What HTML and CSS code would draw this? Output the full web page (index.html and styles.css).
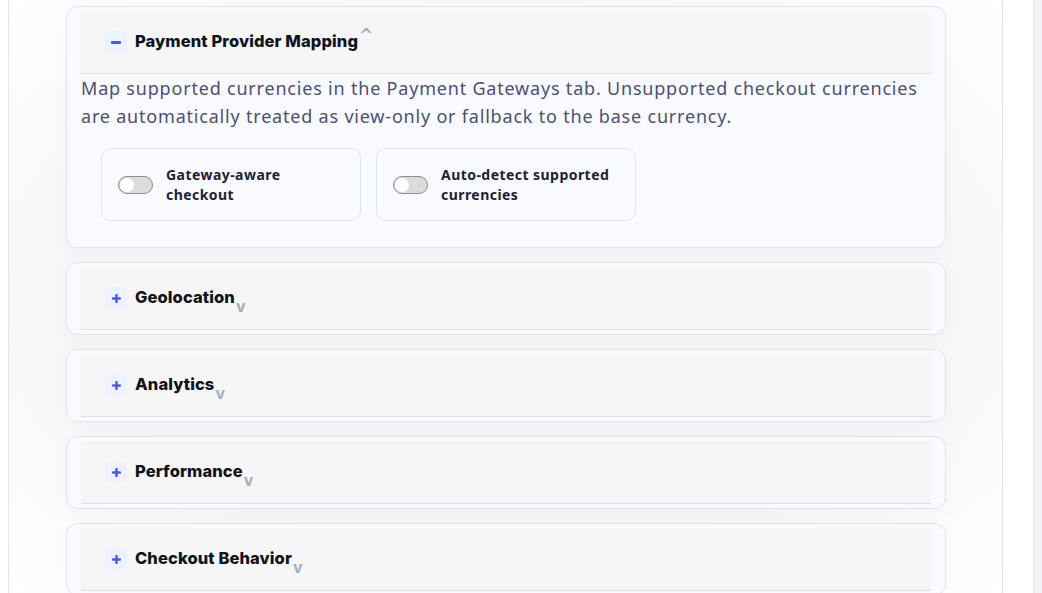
FILE: index.html
```html
<!DOCTYPE html>
<html lang="en">
<head>
  <meta charset="UTF-8">
  <meta name="viewport" content="width=device-width, initial-scale=1.0">
  <title>Currency Settings</title>
  <link rel="stylesheet" href="styles.css">
</head>
<body>
  <div class="page">
    <div class="panel">
      <div class="section open">
        <div class="section-head">
          <span class="sign"><span class="minus"></span></span>
          <span class="title">Payment Provider Mapping</span><span class="caret up">^</span>
        </div>
        <p class="desc">Map supported currencies in the Payment Gateways tab. Unsupported checkout currencies are automatically treated as view-only or fallback to the base currency.</p>
        <div class="toggles">
          <label class="toggle-card">
            <span class="switch"><span class="knob"></span></span>
            <span class="toggle-label">Gateway-aware<br>checkout</span>
          </label>
          <label class="toggle-card">
            <span class="switch"><span class="knob"></span></span>
            <span class="toggle-label">Auto-detect supported<br>currencies</span>
          </label>
        </div>
      </div>

      <div class="section">
        <div class="section-head">
          <span class="sign"><svg width="9" height="9" viewBox="0 0 9 9"><path d="M4.5 1v7M1 4.5h7" stroke="#4b57e6" stroke-width="2.4" stroke-linecap="round"/></svg></span>
          <span class="title">Geolocation</span><span class="caret down">v</span>
        </div>
      </div>

      <div class="section">
        <div class="section-head">
          <span class="sign"><svg width="9" height="9" viewBox="0 0 9 9"><path d="M4.5 1v7M1 4.5h7" stroke="#4b57e6" stroke-width="2.4" stroke-linecap="round"/></svg></span>
          <span class="title">Analytics</span><span class="caret down">v</span>
        </div>
      </div>

      <div class="section">
        <div class="section-head">
          <span class="sign"><svg width="9" height="9" viewBox="0 0 9 9"><path d="M4.5 1v7M1 4.5h7" stroke="#4b57e6" stroke-width="2.4" stroke-linecap="round"/></svg></span>
          <span class="title">Performance</span><span class="caret down">v</span>
        </div>
      </div>

      <div class="section">
        <div class="section-head">
          <span class="sign"><svg width="9" height="9" viewBox="0 0 9 9"><path d="M4.5 1v7M1 4.5h7" stroke="#4b57e6" stroke-width="2.4" stroke-linecap="round"/></svg></span>
          <span class="title">Checkout Behavior</span><span class="caret down">v</span>
        </div>
      </div>
    </div>
    <div class="rail"></div>
  </div>
</body>
</html>
```

FILE: styles.css
```css
html, body {
  margin: 0;
  height: 100%;
  overflow: hidden;
}

body {
  background: #fff;
  font-family: "Noto Sans", sans-serif;
}

.page {
  display: flex;
  height: 100%;
}

.panel {
  margin-left: 8px;
  width: 880px;
  padding: 6px 56px 6px 57px;
  border-left: 1px solid #dfe6f2;
  border-right: 1px solid #dfe6f2;
  background: radial-gradient(ellipse at center, #f6f6f7 60%, #ffffff 100%);
  display: flex;
  flex-direction: column;
  gap: 14px;
  flex-shrink: 0;
}

.rail {
  margin-left: 30px;
  flex: 1;
  background: #f1f2f5;
  border-left: 1px solid #e6e8ee;
}

.section {
  background: #f8faff;
  border: 1px solid #dde5f1;
  border-radius: 12px;
  padding: 4px 14px;
  box-shadow: 0 4px 18px rgba(30, 40, 80, 0.03);
  flex-shrink: 0;
}

.section.open {
  padding-bottom: 26px;
}

.section-head {
  height: 63px;
  box-sizing: border-box;
  background: #f5f6f5;
  border-bottom: 1px solid #dcdfe3;
  display: flex;
  align-items: center;
  padding-left: 24px;
}

.sign {
  width: 22px;
  height: 22px;
  border-radius: 7px;
  background: #eef1fe;
  display: flex;
  align-items: center;
  justify-content: center;
  margin-right: 8px;
}

.minus {
  width: 10px;
  height: 3px;
  background: #4b57e6;
  border-radius: 1px;
}

.title {
  font-family: Inter, sans-serif;
  font-weight: 800;
  font-size: 16.5px;
  color: #10121c;
  letter-spacing: 0.1px;
  position: relative;
  top: -1px;
}

.caret {
  font-weight: 700;
  color: #a3aec0;
  position: relative;
}

.caret.up {
  font-family: "DejaVu Sans", sans-serif;
  font-size: 17px;
  top: -7px;
  margin-left: 1px;
}

.caret.down {
  font-family: Inter, sans-serif;
  font-size: 16px;
  top: 8px;
  margin-left: 1px;
}

.desc {
  margin: 0;
  font-size: 18px;
  line-height: 28px;
  color: #4d5070;
  letter-spacing: 0.8px;
}

.toggles {
  display: flex;
  gap: 15px;
  margin: 18px 0 0 20px;
}

.toggle-card {
  width: 260px;
  height: 73px;
  box-sizing: border-box;
  border: 1px solid #dde5f1;
  border-radius: 10px;
  background: #f8faff;
  display: flex;
  align-items: center;
  padding-left: 16px;
}

.switch {
  width: 33px;
  height: 16px;
  border: 1px solid #8b8f99;
  border-radius: 9px;
  background: #dcdcdc;
  position: relative;
  margin-right: 13px;
  flex-shrink: 0;
}

.knob {
  position: absolute;
  left: 1px;
  top: 1px;
  width: 14px;
  height: 14px;
  border-radius: 50%;
  background: #fff;
}

.toggle-label {
  font-size: 14px;
  font-weight: 700;
  line-height: 20px;
  color: #1e2232;
  letter-spacing: 0.45px;
}
```
